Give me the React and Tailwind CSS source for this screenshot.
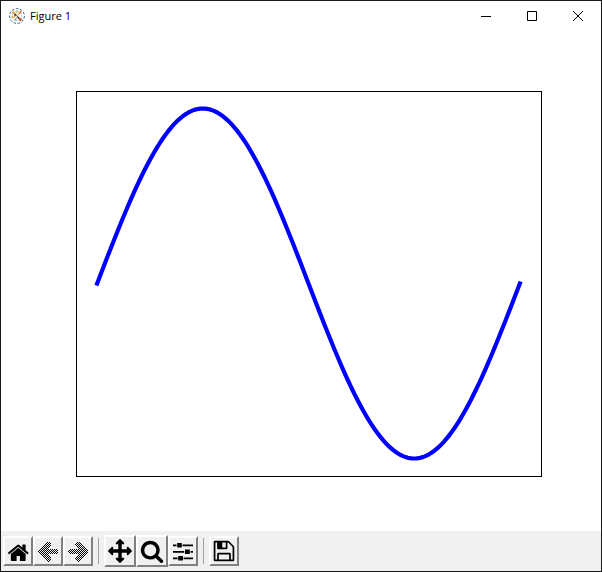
import React from 'react';

const HOME =
  'M1472 992v480q0 26-19 45t-45 19h-384v-384h-256v384h-384q-26 0-45-19t-19-45v-480q0-1 .5-3t.5-3l575-474 575 474q1 2 1 6zm223-69l-62 74q-8 9-21 11h-3q-13 0-21-7l-692-577-692 577q-12 8-24 7-13-2-21-11l-62-74q-8-10-7-23.5t11-21.5l719-599q32-26 76-26t76 26l244 204v-195q0-14 9-23t23-9h192q14 0 23 9t9 23v408l219 182q10 8 11 21.5t-7 23.5z';
const PAN =
  'M1792 896q0 26-19 45l-256 256q-19 19-45 19t-45-19-19-45v-128h-384v384h128q26 0 45 19t19 45-19 45l-256 256q-19 19-45 19t-45-19l-256-256q-19-19-19-45t19-45 45-19h128v-384h-384v128q0 26-19 45t-45 19-45-19l-256-256q-19-19-19-45t19-45l256-256q19-19 45-19t45 19 19 45v128h384v-384h-128q-26 0-45-19t-19-45 19-45l256-256q19-19 45-19t45 19l256 256q19 19 19 45t-19 45-45 19h-128v384h384v-128q0-26 19-45t45-19 45 19l256 256q19 19 19 45z';
const ZOOM =
  'M1216 832q0-185-131.5-316.5t-316.5-131.5-316.5 131.5-131.5 316.5 131.5 316.5 316.5 131.5 316.5-131.5 131.5-316.5zm512 832q0 52-38 90t-90 38q-54 0-90-38l-343-342q-179 124-399 124-143 0-273.5-55.5t-225-150-150-225-55.5-273.5 55.5-273.5 150-225 225-150 273.5-55.5 273.5 55.5 225 150 150 225 55.5 273.5q0 220-124 399l343 343q37 37 37 90z';
const SAVE =
  'M512 1536h768v-384h-768v384zm896 0h128v-896q0-14-10-38.5t-20-34.5l-281-281q-10-10-34-20t-39-10v416q0 40-28 68t-68 28h-576q-40 0-68-28t-28-68v-416h-128v1280h128v-416q0-40 28-68t68-28h832q40 0 68 28t28 68v416zm-384-928v-320q0-13-9.5-22.5t-22.5-9.5h-192q-13 0-22.5 9.5t-9.5 22.5v320q0 13 9.5 22.5t22.5 9.5h192q13 0 22.5-9.5t9.5-22.5zm640 32v928q0 40-28 68t-68 28h-1344q-40 0-68-28t-28-68v-1344q0-40 28-68t68-28h928q40 0 88 20t76 48l280 280q28 28 48 76t20 88z';

const Glyph = ({ d, viewBox = '0 0 1792 1792' }) => (
  <svg viewBox={viewBox} className="size-6" aria-hidden="true">
    <path d={d} />
  </svg>
);

// Disabled arrows are stippled, every other pixel is left out
const StippledArrow = ({ id, d }) => (
  <svg viewBox="0 0 24 24" className="size-6" shapeRendering="crispEdges" aria-hidden="true">
    <defs>
      <pattern id={id} width="2" height="2" patternUnits="userSpaceOnUse">
        <rect width="1" height="1" />
        <rect x="1" y="1" width="1" height="1" />
      </pattern>
    </defs>
    <path d={d} fill={`url(#${id})`} />
  </svg>
);

const Sliders = () => (
  <svg viewBox="0 0 24 24" className="size-6" aria-hidden="true">
    <path d="M2 5.4h3.5v1.8H2zM11.5 5.4H22v1.8H11.5zM2 11.9h11.2v1.8H2zM19.6 11.9H22v1.8h-2.4zM2 18.4h4.6v1.8H2zM12.6 18.4H22v1.8h-9.4z" />
    <path d="M6.2 4.1h4.6v4.4H6.2zM14 10.6h4.8V15H14zM7.2 17.1H12v4.4H7.2z" />
  </svg>
);

const Logo = () => (
  <svg viewBox="0 0 16 16" className="size-4" aria-hidden="true">
    <circle cx="8" cy="8" r="7.4" fill="#fff" stroke="#11557c" strokeWidth="0.9" strokeDasharray="2.6 1.6" />
    <circle cx="8" cy="8" r="4.6" fill="none" stroke="#b5c3cc" strokeWidth="0.6" />
    <path d="M8 8L2.6 5L4.6 2.6z" fill="#e8a04c" />
    <path d="M8 8L7 2.4L9 2.4z" fill="#b9c46a" />
    <path d="M8 8L11.4 2.4L13 4z" fill="#e0702c" />
    <path d="M8 8L2 8.4L3 10.6z" fill="#d9b04a" />
    <path d="M8 8L4.8 12.6L7.2 13z" fill="#8fb0a0" />
    <path d="M8 8L11 13.4L13.4 11.4z" fill="#c2502a" />
    <path d="M8 8L4.8 7.4L6.2 5.2zM8 8L10.6 9.2L9 11z" fill="#333" />
  </svg>
);

const WindowButton = ({ label, d }) => (
  <button type="button" aria-label={label} className="flex h-full w-[46px] items-center justify-center hover:bg-gray-200">
    <svg viewBox="0 0 10 10" className="size-[10px]" fill="none" stroke="#000" aria-hidden="true">
      <path d={d} />
    </svg>
  </button>
);

const ToolButton = ({ label, large, disabled, children }) => (
  <button
    type="button"
    aria-label={label}
    disabled={disabled}
    className={`flex shrink-0 items-center justify-center border-2 border-t-white border-l-white border-r-[#808080] border-b-[#808080] bg-[#f0f0f0] ${
      large ? 'size-8' : 'size-[30px]'
    }`}
  >
    {children}
  </button>
);

const Separator = () => <div className="mx-[5px] h-[26px] w-px bg-[#a0a0a0]" />;

// One period of a sine, with a 5% margin inside the axes
const AXES = { x: 75, y: 60, width: 465, height: 385 };
const POINTS = Array.from({ length: 201 }, (_, i) => {
  const t = i / 200;
  const x = AXES.x + AXES.width * (0.5 + (t - 0.5) / 1.1);
  const y = AXES.y + AXES.height * (0.5 - Math.sin(2 * Math.PI * t) / 2.2);
  return `${x.toFixed(2)},${y.toFixed(2)}`;
}).join(' ');

const Figure = () => (
  <svg viewBox="0 0 600 500" className="block w-full" role="img" aria-label="Sine curve">
    <polyline points={POINTS} fill="none" stroke="#00f" strokeWidth="4.17" strokeLinecap="square" strokeLinejoin="round" />
    <rect x="75.5" y="60.5" width="465" height="385" fill="none" stroke="#000" />
  </svg>
);

export default function App() {
  return (
    <div className="flex min-h-screen flex-col border border-[#1a1a1a] bg-white">
      <header className="flex h-[30px] items-center pl-2">
        <Logo />
        <h1 className="ml-[5px] flex-1 font-['Open_Sans',sans-serif] text-[11px] leading-4 text-black">Figure 1</h1>
        <WindowButton label="Minimize" d="M0 5.5h10" />
        <WindowButton label="Maximize" d="M.5 .5h9v9h-9z" />
        <WindowButton label="Close" d="M0 0l10 10M10 0L0 10" />
      </header>

      <main className="flex-1">
        <Figure />
      </main>

      <div role="toolbar" aria-label="Figure tools" className="flex h-10 items-center bg-[#f0f0f0] pl-0.5">
        <ToolButton label="Home">
          <Glyph d={HOME} viewBox="-60 -180 1872 1872" />
        </ToolButton>
        <ToolButton label="Back" disabled>
          <StippledArrow id="stipple-back" d="M11 3H13L15 5V7L12 10H21L22 11V14L21 15H12L15 18V21L13 23H11L2 14V12z" />
        </ToolButton>
        <ToolButton label="Forward" disabled>
          <StippledArrow id="stipple-forward" d="M13 3H11L9 5V7L12 10H3L2 11V14L3 15H12L9 18V21L11 23H13L22 14V12z" />
        </ToolButton>
        <Separator />
        <ToolButton label="Pan" large>
          <Glyph d={PAN} />
        </ToolButton>
        <ToolButton label="Zoom" large>
          <Glyph d={ZOOM} />
        </ToolButton>
        <ToolButton label="Configure subplots">
          <Sliders />
        </ToolButton>
        <Separator />
        <ToolButton label="Save">
          <Glyph d={SAVE} />
        </ToolButton>
      </div>
    </div>
  );
}
